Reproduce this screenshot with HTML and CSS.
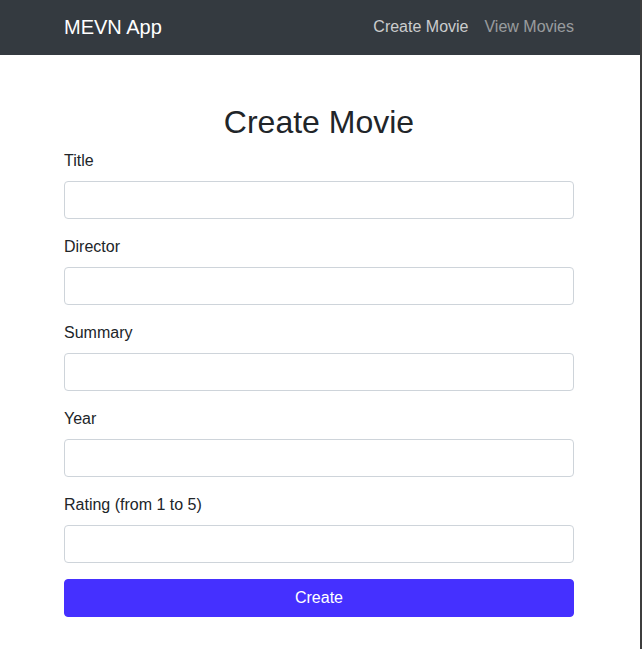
FILE: index.html
```html
<!DOCTYPE html>
<html lang="en">
<head>
<meta charset="utf-8">
<title>MEVN App</title>
<link rel="stylesheet" href="styles.css">
</head>
<body>
<div class="frame">
  <nav class="navbar">
    <div class="container nav-inner">
      <a class="brand" href="#">MEVN App</a>
      <ul class="nav">
        <li><a class="nav-link active" href="#">Create Movie</a></li>
        <li><a class="nav-link" href="#">View Movies</a></li>
      </ul>
    </div>
  </nav>
  <main class="container main">
    <h2 class="title">Create Movie</h2>
    <form class="form">
      <div class="form-group">
        <label class="label" for="title">Title</label>
        <input class="input" id="title" type="text">
      </div>
      <div class="form-group">
        <label class="label" for="director">Director</label>
        <input class="input" id="director" type="text">
      </div>
      <div class="form-group">
        <label class="label" for="summary">Summary</label>
        <input class="input" id="summary" type="text">
      </div>
      <div class="form-group">
        <label class="label" for="year">Year</label>
        <input class="input" id="year" type="text">
      </div>
      <div class="form-group">
        <label class="label" for="rating">Rating (from 1 to 5)</label>
        <input class="input" id="rating" type="text">
      </div>
      <button class="btn" type="button">Create</button>
    </form>
  </main>
</div>
</body>
</html>
```
FILE: styles.css
```css
* { box-sizing: border-box; }
html, body { margin: 0; padding: 0; background: #fff; }
body {
  font-family: "Liberation Sans", Arial, sans-serif;
  font-size: 16px;
  line-height: 1.5;
  color: #212529;
}
.frame {
  width: 642px;
  min-height: 649px;
  border-right: 2px solid #3d3d3d;
}
.container {
  width: 510px;
  margin-left: 64px;
}
.navbar {
  background: #343a40;
  height: 55px;
  padding-top: 12px;
}
.nav-inner {
  display: flex;
  align-items: center;
  justify-content: space-between;
}
.brand {
  color: #fff;
  font-size: 20px;
  line-height: 30px;
  text-decoration: none;
}
.nav {
  display: flex;
  list-style: none;
  margin: 0;
  padding: 0;
}
.nav-link {
  display: block;
  padding: 3px 0 3px 16px;
  color: rgba(255, 255, 255, 0.5);
  text-decoration: none;
  line-height: 24px;
}
.nav-link.active { color: rgba(255, 255, 255, 0.75); }
.main { padding-top: 48px; }
.title {
  margin: 0 0 8px;
  font-size: 32px;
  font-weight: 400;
  line-height: 1.2;
  text-align: center;
  color: #212529;
}
.form { margin: 0; }
.form-group { margin-bottom: 16px; }
.label {
  display: inline-block;
  margin-bottom: 8px;
}
.input {
  display: block;
  width: 100%;
  height: 38px;
  padding: 6px 12px;
  font: inherit;
  color: #495057;
  background: #fff;
  border: 1px solid #ced4da;
  border-radius: 4px;
}
.btn {
  display: block;
  width: 100%;
  height: 38px;
  padding: 6px 12px;
  font: inherit;
  color: #fff;
  background: #4530ff;
  border: 1px solid #4530ff;
  border-radius: 4px;
}
```
